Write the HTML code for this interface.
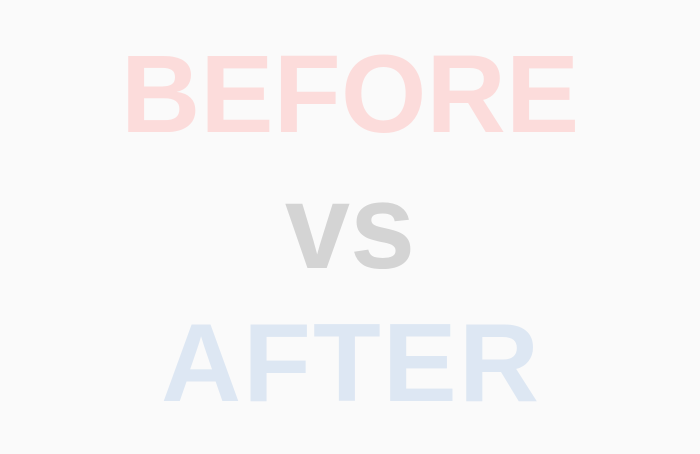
<!DOCTYPE html>
<html><head><style>
html,body{margin:0;padding:0;width:700px;height:454px;background:#fafafa;overflow:hidden}
.t{position:absolute;left:0;width:700px;text-align:center;font-family:"Liberation Sans",Arial,sans-serif;font-weight:bold;line-height:1}
</style></head><body>
<div class="t" style="top:40px;font-size:110px;color:#fcdcdb">BEFORE</div>
<div class="t" style="top:165px;font-size:122px;color:#d4d4d4;transform:scaleX(0.96)">vs</div>
<div class="t" style="top:308px;font-size:111px;color:#dde7f3;letter-spacing:2px;text-indent:2px">AFTER</div>
</body></html>
